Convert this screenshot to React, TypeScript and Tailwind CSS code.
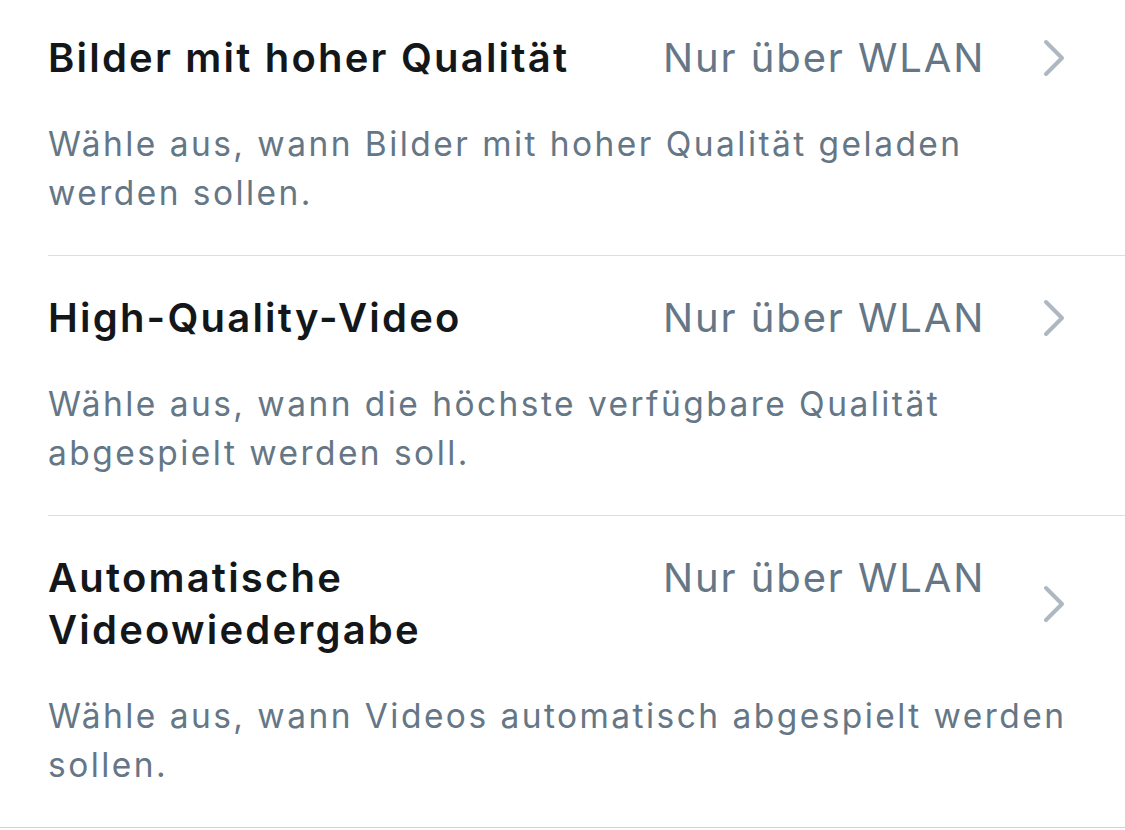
import React from "react";

type Setting = {
  title: string;
  value: string;
  description: string;
};

const settings: Setting[] = [
  {
    title: "Bilder mit hoher Qualität",
    value: "Nur über WLAN",
    description: "Wähle aus, wann Bilder mit hoher Qualität geladen werden sollen.",
  },
  {
    title: "High-Quality-Video",
    value: "Nur über WLAN",
    description: "Wähle aus, wann die höchste verfügbare Qualität abgespielt werden soll.",
  },
  {
    title: "Automatische Videowiedergabe",
    value: "Nur über WLAN",
    description: "Wähle aus, wann Videos automatisch abgespielt werden sollen.",
  },
];

function Chevron() {
  return (
    <svg width="22" height="38" viewBox="0 0 22 38" fill="none" className="shrink-0">
      <path d="M3 3 L19 19 L3 35" stroke="#aeb8c2" strokeWidth="4" strokeLinecap="round" strokeLinejoin="round" />
    </svg>
  );
}

function SettingRow({ setting, isLast }: { setting: Setting; isLast: boolean }) {
  return (
    <div className={isLast ? "border-b border-[#d2d4d6]" : "ml-12 border-b border-[#dcdfe2]"}>
      <div className={isLast ? "pl-12 pr-12 pt-9 pb-[37px]" : "pr-12 pt-9 pb-[37px]"}>
        <div className="flex items-center">
          <div className="flex flex-1 items-start">
            <div className="flex-1 pr-6 text-[40px] leading-[52px] font-semibold text-[#14171a] tracking-[2.2px]">
              {setting.title}
            </div>
            <div className="w-[322px] whitespace-nowrap text-[40px] leading-[52px] text-[#657786] tracking-[1.9px]">
              {setting.value}
            </div>
          </div>
          <div className="ml-[58px] mr-[12px]">
            <Chevron />
          </div>
        </div>
        <p className="mt-9 text-[33.5px] leading-[49px] text-[#657786] tracking-[2.45px]">
          {setting.description}
        </p>
      </div>
    </div>
  );
}

export default function App() {
  return (
    <div
      className="w-[1125px] h-[830px] overflow-hidden bg-white"
      style={{ fontFamily: "Inter, 'Noto Sans', sans-serif" }}
    >
      <div className="-mt-[4px]">
        {settings.map(function (setting, i) {
          return <SettingRow key={setting.title} setting={setting} isLast={i === settings.length - 1} />;
        })}
      </div>
    </div>
  );
}
